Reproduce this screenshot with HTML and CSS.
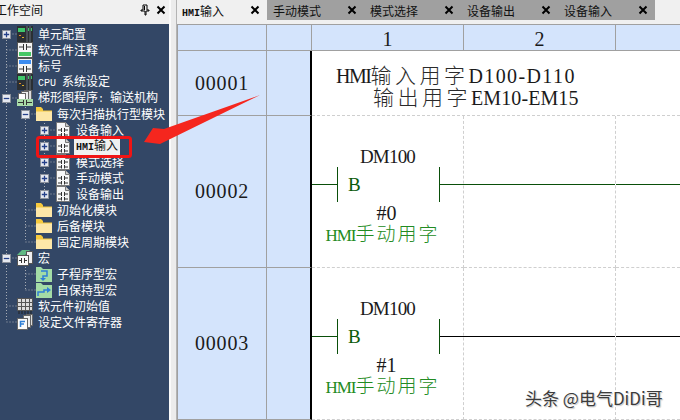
FILE: index.html
```html
<!DOCTYPE html>
<html lang="zh">
<head>
<meta charset="utf-8">
<title>工作空间</title>
<link rel="stylesheet" href="styles.css">
</head>
<body>
<svg class="defs" xmlns="http://www.w3.org/2000/svg">
  <symbol id="plus" viewBox="0 0 10 10"><rect x=".5" y=".5" width="9" height="9" fill="#e6e9f0" stroke="#8a8f99"/><path d="M2 5h6M5 2v6" stroke="#24408a" stroke-width="1.4"/></symbol>
  <symbol id="minus" viewBox="0 0 10 10"><rect x=".5" y=".5" width="9" height="9" fill="#e6e9f0" stroke="#8a8f99"/><path d="M2 5h6" stroke="#24408a" stroke-width="1.4"/></symbol>
  <symbol id="rack" viewBox="0 0 16 16"><rect width="16" height="16" fill="#2b2f33"/><rect x="1" y="2" width="7" height="4" fill="#3fc66b"/><rect x="2" y="9" width="2" height="1" fill="#e08a2a"/><rect x="5" y="11" width="2" height="1" fill="#e0b02a"/><path d="M10 0v16M13 0v16" stroke="#66707a"/><rect x="11" y="2" width="1" height="3" fill="#3fc66b"/><rect x="14" y="2" width="1" height="3" fill="#3fc66b"/></symbol>
  <symbol id="coil" viewBox="0 0 16 16"><rect x=".5" y=".5" width="15" height="15" fill="#f4f4f4" stroke="#555"/><path d="M2 5h4M10 5h4M6.500 2v6M9.500 2v6" stroke="#333" fill="none"/><rect x="2" y="10" width="12" height="4" fill="#45c765"/></symbol>
  <symbol id="label" viewBox="0 0 16 16"><rect x=".5" y=".5" width="15" height="15" fill="#f4f4f4" stroke="#555"/><rect x="2" y="2" width="12" height="4" fill="#3c8cf0"/><path d="M2 11h4M10 11h4M6.500 8v6M9.500 8v6" stroke="#333" fill="none"/></symbol>
  <symbol id="stack" viewBox="0 0 16 16"><rect x="7.500" y=".5" width="7" height="9" fill="#ddd" stroke="#666"/><rect x="4.500" y="1.500" width="7" height="9" fill="#eee" stroke="#666"/><rect x="1.500" y="3.500" width="7" height="7" fill="#fff" stroke="#666"/><rect y="9" width="16" height="7" fill="#a8dba8"/><path d="M1 12.500h5M10 12.500h5M6.500 10v5M9.500 10v5" stroke="#333"/></symbol>
  <symbol id="folder" viewBox="0 0 16 16"><path d="M0 3h6l1 2h9v10H0z" fill="#fde7a8"/><path d="M0 1h5l2 2v2H0z" fill="#f6c93e"/><path d="M0 5h16" stroke="#f6c93e"/></symbol>
  <symbol id="ladder" viewBox="0 0 16 16"><path d="M1.500.5h9l4 4v11h-13z" fill="#f7f7f7" stroke="#777"/><path d="M10.500.5v4h4" fill="#ccc" stroke="#777"/><path d="M3 8h3M10 8h3M6.500 6v4M9.500 6v4M3 13h3M10 13h3M6.500 11v3.500M9.500 11v3.500" stroke="#333"/></symbol>
  <symbol id="macro" viewBox="0 0 16 16"><path d="M0 5l5-5h8l-5 5z" fill="#5fb983"/><rect x="9.500" y="1.500" width="6" height="12" fill="#eee" stroke="#555"/><rect x=".5" y="5.500" width="11" height="10" fill="#f8f8f8" stroke="#555"/><path d="M2 10.500h2.500M7.500 10.500H10M4.500 8v5M7.500 8v5" stroke="#333"/></symbol>
  <symbol id="subcall" viewBox="0 0 16 16"><path d="M0 1h5l2 2h9v13H0z" fill="#a3dca6"/><path d="M5 5h6v5H7v4" fill="none" stroke="#2f7fd6" stroke-width="1.500"/><path d="M4 12h6l-3 3z" fill="#2f7fd6"/></symbol>
  <symbol id="selfhold" viewBox="0 0 16 16"><path d="M0 1h5l2 2h9v13H0z" fill="#a3dca6"/><path d="M2 14v-4h6V8h3" fill="none" stroke="#2f7fd6" stroke-width="1.500"/><path d="M11 5v6l4-3z" fill="#2f7fd6"/></symbol>
  <symbol id="table" viewBox="0 0 16 16"><rect width="16" height="13" fill="#555"/><path d="M1 1h3v3H1zM5 1h3v3H5zM9 1h3v3H9zM13 1h2v3h-2zM1 5h3v3H1zM5 5h3v3H5zM9 5h3v3H9zM13 5h2v3h-2zM1 9h3v3H1zM5 9h3v3H5zM9 9h3v3H9zM13 9h2v3h-2z" fill="#ddd"/><path d="M2 13v3M5 13v3M8 13v3M11 13v3M14 13v3" stroke="#222"/></symbol>
  <symbol id="files" viewBox="0 0 16 16"><rect x="9.500" y=".5" width="6" height="11" fill="#ddd" stroke="#666"/><rect x="6.500" y="1.500" width="7" height="12" fill="#eee" stroke="#666"/><rect x=".5" y="4.500" width="10" height="11" fill="#fafafa" stroke="#666"/><path d="M3.500 13V7.500H8M3.500 10H7" fill="none" stroke="#2f7fd6" stroke-width="1.500"/></symbol>
  <symbol id="close" viewBox="0 0 10 10"><path d="M1.500 1.500l7 7M8.500 1.500l-7 7" stroke="#000" stroke-width="2"/></symbol>
</svg>

<div class="app">
  <aside class="side">
    <header class="side-head">
      <span class="side-title">工作空间</span>
      <span class="side-tools">
        <svg class="pin" viewBox="0 0 10 12"><path d="M3 1h4v5h2v1H6v4H5V7H1V6h2zM4.500 2v4" fill="none" stroke="#000"/></svg>
        <svg class="side-close"><use href="#close"/></svg>
      </span>
    </header>
    <nav class="tree">
      <svg class="tree-lines" viewBox="0 0 169 396">
        <path d="M6.500 16V298M6.500 10H17M6.500 26H17M6.500 42H17M6.500 58H17M6.500 74H17M6.500 234H17M6.500 282H17M6.500 298H17M25.500 80V218M25.500 90H36M25.500 186H36M25.500 202H36M25.500 218H36M44.500 96V170M44.500 106H55M44.500 122H55M44.500 138H55M44.500 154H55M44.500 170H55M25.500 240V266M25.500 250H36M25.500 266H36" fill="none" stroke="#a8adb5" stroke-dasharray="1 2"/>
      </svg>
      <div class="row l0"><svg class="exp"><use href="#plus"/></svg><svg class="ico"><use href="#rack"/></svg><span class="txt">单元配置</span></div>
      <div class="row l0"><span class="exp"></span><svg class="ico"><use href="#coil"/></svg><span class="txt">软元件注释</span></div>
      <div class="row l0"><span class="exp"></span><svg class="ico"><use href="#label"/></svg><span class="txt">标号</span></div>
      <div class="row l0"><span class="exp"></span><svg class="ico"><use href="#rack"/></svg><span class="txt"><span class="lat">CPU </span>系统设定</span></div>
      <div class="row l0"><svg class="exp"><use href="#minus"/></svg><svg class="ico"><use href="#stack"/></svg><span class="txt">梯形图程序<span class="lat">: </span>输送机构</span></div>
      <div class="row l1"><svg class="exp"><use href="#minus"/></svg><svg class="ico"><use href="#folder"/></svg><span class="txt">每次扫描执行型模块</span></div>
      <div class="row l2"><svg class="exp"><use href="#plus"/></svg><svg class="ico"><use href="#ladder"/></svg><span class="txt">设备输入</span></div>
      <div class="row l2"><svg class="exp"><use href="#plus"/></svg><svg class="ico"><use href="#ladder"/></svg><span class="txt sel"><span class="lat">HMI</span>输入</span></div>
      <div class="row l2"><svg class="exp"><use href="#plus"/></svg><svg class="ico"><use href="#ladder"/></svg><span class="txt">模式选择</span></div>
      <div class="row l2"><svg class="exp"><use href="#plus"/></svg><svg class="ico"><use href="#ladder"/></svg><span class="txt">手动模式</span></div>
      <div class="row l2"><svg class="exp"><use href="#plus"/></svg><svg class="ico"><use href="#ladder"/></svg><span class="txt">设备输出</span></div>
      <div class="row l1"><span class="exp"></span><svg class="ico"><use href="#folder"/></svg><span class="txt">初始化模块</span></div>
      <div class="row l1"><span class="exp"></span><svg class="ico"><use href="#folder"/></svg><span class="txt">后备模块</span></div>
      <div class="row l1"><span class="exp"></span><svg class="ico"><use href="#folder"/></svg><span class="txt">固定周期模块</span></div>
      <div class="row l0"><svg class="exp"><use href="#minus"/></svg><svg class="ico"><use href="#macro"/></svg><span class="txt">宏</span></div>
      <div class="row l1"><span class="exp"></span><svg class="ico"><use href="#subcall"/></svg><span class="txt">子程序型宏</span></div>
      <div class="row l1"><span class="exp"></span><svg class="ico"><use href="#selfhold"/></svg><span class="txt">自保持型宏</span></div>
      <div class="row l0"><span class="exp"></span><svg class="ico"><use href="#table"/></svg><span class="txt">软元件初始值</span></div>
      <div class="row l0"><span class="exp"></span><svg class="ico"><use href="#files"/></svg><span class="txt">设定文件寄存器</span></div>
    </nav>
  </aside>
  <div class="gutter"></div>
  <main class="main">
    <div class="tabs">
      <div class="tab active"><span><span class="tab-lat">HMI</span>输入</span><svg class="tab-x"><use href="#close"/></svg></div>
      <div class="tab"><span>手动模式</span><svg class="tab-x"><use href="#close"/></svg></div>
      <div class="tab"><span>模式选择</span><svg class="tab-x"><use href="#close"/></svg></div>
      <div class="tab"><span>设备输出</span><svg class="tab-x"><use href="#close"/></svg></div>
      <div class="tab"><span>设备输入</span><svg class="tab-x"><use href="#close"/></svg></div>
    </div>
    <div class="sheet">
      <div class="hd"></div>
      <div class="hd"></div>
      <div class="hd num">1</div>
      <div class="hd num">2</div>
      <div class="hd end"></div>

      <div class="rownum">00001</div>
      <div class="gap"></div>
      <div class="comment">
        <div class="line"><span class="t-hmi">HMI</span><span class="cjk">输入用字</span><span class="t-d">D100-D110</span></div>
        <div class="line indent"><span class="cjk">输出用字</span><span class="t-em">EM10-EM15</span></div>
      </div>

      <div class="rownum">00002</div>
      <div class="gap"></div>
      <div class="cell">
        <div class="dev">DM100</div>
        <div class="rung">
          <span class="wire lead"></span>
          <span class="contact">B</span>
          <span class="wire tail"></span>
        </div>
        <div class="val">#0</div>
        <div class="note"><span class="note-lat">HMI</span><span class="note-cjk">手动用字</span></div>
      </div>
      <div class="cell blank"><div class="wire-only"></div></div>
      <div class="cell blank end"><div class="wire-only"></div></div>

      <div class="rownum">00003</div>
      <div class="gap"></div>
      <div class="cell">
        <div class="dev">DM100</div>
        <div class="rung">
          <span class="wire lead"></span>
          <span class="contact">B</span>
          <span class="wire tail black"></span>
        </div>
        <div class="val">#1</div>
        <div class="note"><span class="note-lat">HMI</span><span class="note-cjk">手动用字</span></div>
      </div>
      <div class="cell blank"><div class="wire-only black"></div></div>
      <div class="cell blank end"><div class="wire-only black"></div></div>
    </div>
  </main>
</div>

<svg class="annot" viewBox="0 0 680 420">
  <rect x="37.500" y="137.500" width="93" height="19" rx="2" fill="none" stroke="#f01414" stroke-width="3"/>
  <path d="M260 95 L164 129 L153 128 L144 142 L160 144 Z" fill="#f5261e"/>
</svg>
<div class="mark">头条 @电气DiDi哥</div>
</body>
</html>
```

FILE: styles.css
```css
* { box-sizing: border-box; }
html, body { margin: 0; padding: 0; }
body {
  width: 680px;
  height: 420px;
  overflow: hidden;
  position: relative;
  background: #f0f0f0;
  font-family: "Noto Sans CJK SC", "Liberation Sans", sans-serif;
  font-size: 12px;
}
.defs { display: none; }

.app { display: flex; width: 680px; height: 420px; }

/* workspace panel */
.side { width: 169px; height: 420px; display: flex; flex-direction: column; flex: none; }
.side-head {
  height: 24px;
  flex: none;
  display: flex;
  align-items: center;
  justify-content: space-between;
  padding: 0 3px 4px 0;
  overflow: hidden;
  color: #111;
}
.side-title { margin-left: -5px; font-size: 12px; line-height: 16px; }
.side-tools { display: flex; align-items: center; gap: 6px; }
.pin { width: 10px; height: 12px; display: block; }
.side-close { width: 10px; height: 10px; display: block; }

.tree {
  flex: 1;
  position: relative;
  background: #334766;
  padding-top: 2px;
  color: #fff;
}
.tree-lines { position: absolute; left: 0; top: 0; width: 169px; height: 396px; }
.row {
  position: relative;
  height: 16px;
  display: flex;
  align-items: center;
  white-space: nowrap;
}
.l0 { padding-left: 2px; }
.l1 { padding-left: 21px; }
.l2 { padding-left: 40px; }
.exp { width: 9px; height: 9px; flex: none; margin-right: 6px; display: block; }
.ico { width: 16px; height: 16px; flex: none; margin-right: 5px; display: block; }
.txt { font-size: 12px; line-height: 14px; }
.lat { font-family: "Liberation Mono", monospace; font-size: 10px; white-space: pre; }
.sel {
  background: #f0f0f0;
  color: #111;
  margin-left: -2px;
  padding: 0 2px;
}
.sel .lat { font-weight: bold; }

.gutter {
  width: 8px;
  flex: none;
  background: #ececec;
  border-left: 2px solid #fafafa;
  border-right: 1px solid #b4b4b4;
}

/* right part */
.main { flex: 1; min-width: 0; display: flex; flex-direction: column; }
.tabs { height: 24px; display: flex; padding-bottom: 4px; flex: none; }
.tab {
  width: 97px;
  height: 20px;
  background: #a0a0a0;
  color: #111;
  display: flex;
  align-items: center;
  justify-content: space-between;
  padding: 0 7px 0 6px;
  flex: none;
}
.tab.active { width: 90px; background: #f0f0f0; padding-left: 5px; }
.tab-lat { font-family: "Liberation Mono", monospace; font-size: 10px; font-weight: bold; }
.tab-x { width: 10px; height: 10px; display: block; }

.sheet {
  flex: 1;
  display: grid;
  grid-template-columns: 89px 45px 152px 152px 1fr;
  grid-template-rows: 26px 65px 152px 152px;
  border-top: 1px solid #a0a0a0;
  border-left: 1px solid #a0a0a0;
  background: #fff;
  font-family: "Liberation Serif", serif;
  color: #1a1a1a;
  overflow: hidden;
}
.hd {
  background: #d4e4fc;
  border-right: 1px solid #a0a0a0;
  border-bottom: 1px solid #a0a0a0;
}
.hd.end { border-right: 0; }
.num { font-size: 20px; line-height: 28px; text-align: center; }
.rownum {
  background: #d4e4fc;
  border-right: 1px solid #a0a0a0;
  border-bottom: 1px solid #a0a0a0;
  font-size: 20px;
  letter-spacing: .8px;
  display: flex;
  align-items: center;
  justify-content: center;
}
.gap {
  background: #d4e4fc;
  border-right: 2px solid #000;
  border-bottom: 1px solid #a0a0a0;
}
.comment {
  grid-column: 3 / 6;
  border-bottom: 1px dashed #cfcfcf;
  padding: 13px 0 0 24px;
  font-size: 20px;
  white-space: nowrap;
}
.line { height: 22px; line-height: 22px; }
.indent { padding-left: 37px; }
.t-hmi { letter-spacing: -1.5px; }
.t-d { letter-spacing: 1.4px; }
.t-em { letter-spacing: .1px; }
.cjk {
  font-family: "Noto Sans CJK SC", sans-serif;
  font-size: 21px;
  line-height: 1;
  letter-spacing: 3.5px;
  font-weight: 300;
  color: #2a2a2a;
}

.cell {
  border-right: 1px dashed #cfcfcf;
  border-bottom: 1px dashed #cfcfcf;
  display: flex;
  flex-direction: column;
  align-items: center;
  padding-top: 31px;
}
.cell.blank { padding-top: 0; }
.cell.end { border-right: 0; }
.dev { height: 20px; font-size: 19px; letter-spacing: -.8px; line-height: 20px; }
.rung { width: 100%; height: 35px; display: flex; align-items: center; flex: none; }
.wire { height: 1px; background: #0a4f0a; display: block; flex: none; }
.wire.black, .wire-only.black { background: #000; }
.lead { width: 25px; }
.tail { flex: 1; margin-right: -1px; }
.contact {
  width: 103px;
  height: 35px;
  flex: none;
  border-left: 1px solid #0a4f0a;
  border-right: 1px solid #0a4f0a;
  color: #0a5a0a;
  font-size: 19px;
  line-height: 35px;
  padding-left: 10px;
}
.val { height: 20px; margin-top: 1px; font-size: 20px; line-height: 20px; padding-right: 2px; }
.note {
  height: 22px;
  color: #228b22;
  line-height: 22px;
  padding-right: 10px;
  white-space: nowrap;
}
.note-lat { font-size: 17px; letter-spacing: -1px; }
.note-cjk {
  font-family: "Noto Sans CJK SC", sans-serif;
  font-size: 19px;
  line-height: 1;
  letter-spacing: 2px;
  font-weight: 300;
}
.wire-only { width: 100%; height: 1px; margin-top: 68px; background: #0a4f0a; flex: none; }

/* annotation overlays */
.annot { position: absolute; left: 0; top: 0; width: 680px; height: 420px; pointer-events: none; }
.mark {
  position: absolute;
  left: 525px;
  top: 386px;
  font-size: 17px;
  line-height: 24px;
  color: #3c3c3c;
  text-shadow: 0 0 2px #fff, 1px 1px 1px #bbb;
  white-space: nowrap;
}
```
